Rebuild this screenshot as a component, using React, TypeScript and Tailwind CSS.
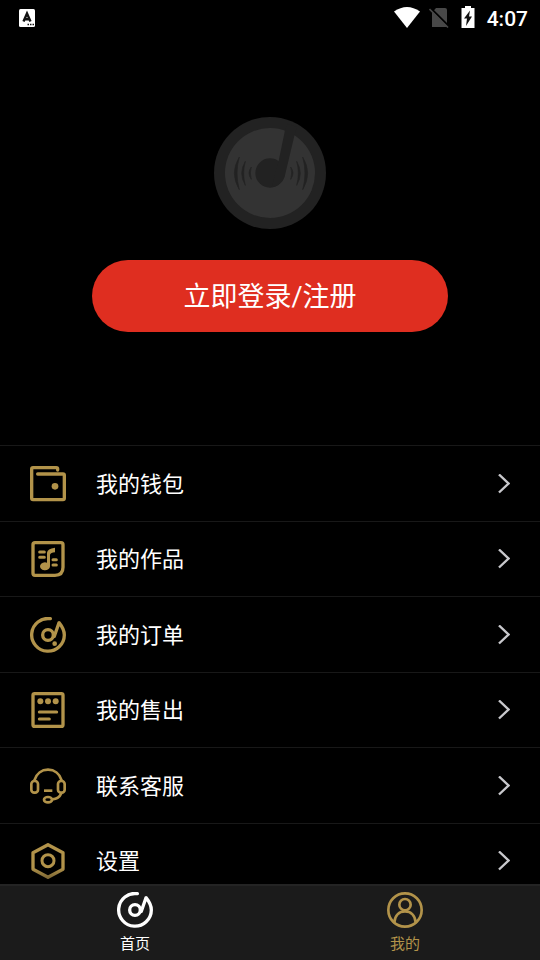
import type { ReactNode } from "react";

interface IconProps {
  children: ReactNode;
}

const LineIcon: React.FC<IconProps> = ({ children }) => (
  <svg
    viewBox="0 0 108 108"
    className="size-9 shrink-0"
    fill="none"
    stroke="currentColor"
    strokeWidth={9}
    strokeLinecap="round"
    strokeLinejoin="round"
    aria-hidden="true"
  >
    {children}
  </svg>
);

const WalletIcon = () => (
  <LineIcon>
    <path strokeWidth={10} d="M83 12V9q0-4-4-4H9q-4 0-4 4v88q0 4 4 4h90q4 0 4-4V28q0-4-4-4H23" />
    <circle cx={75} cy={61} r={10} fill="currentColor" stroke="none" />
  </LineIcon>
);

const WorksIcon = () => (
  <LineIcon>
    <path strokeWidth={10} d="M15 5h78q6 0 6 6v68q0 24-24 24H15q-6 0-6-6V11q0-6 6-6Z" />
    <path
      fill="currentColor"
      stroke="none"
      d="M51 35q1-12 24-15v14q-13 1-15 7v35a15 12 0 1 1-9-11Z"
    />
    <path strokeWidth={9} d="M29 33h14M29 49h14M69 56h10M69 72h10" />
  </LineIcon>
);

const DiscIcon = ({ dot = false }: { dot?: boolean }) => (
  <LineIcon>
    <path strokeWidth={10} d="M61 5A49 49 0 1 0 103 54C103 40 96 28 87 17L73 58" />
    <circle strokeWidth={10} cx={54} cy={54} r={16} />
    {dot && <circle cx={74} cy={80} r={7} fill="currentColor" stroke="none" />}
  </LineIcon>
);

const SoldIcon = () => (
  <LineIcon>
    <rect strokeWidth={10} x={9} y={5} width={90} height={98} rx={5} />
    <g fill="currentColor" stroke="none">
      <circle cx={31} cy={28} r={9} />
      <circle cx={54} cy={28} r={9} />
      <circle cx={77} cy={28} r={9} />
    </g>
    <path d="M28 60h52M28 81h30" />
  </LineIcon>
);

const ServiceIcon = () => (
  <LineIcon>
    <g strokeWidth={8}>
      <rect x={4} y={39} width={20} height={35} rx={9} />
      <rect x={84} y={39} width={20} height={35} rx={9} />
      <path d="M13 37C19 17 35 5 54 5s35 12 41 32M94 76q-7 17-27 18" />
      <ellipse cx={54} cy={95} rx={12} ry={8} />
      <path strokeLinecap="butt" d="M42 68h25" />
    </g>
  </LineIcon>
);

const SettingsIcon = () => (
  <LineIcon>
    <defs>
      <linearGradient id="settings-fade" x1="0" y1="0" x2="0" y2="1">
        <stop offset="0.7" stopColor="#b2934a" />
        <stop offset="1" stopColor="#806a36" />
      </linearGradient>
    </defs>
    <path strokeWidth={10} stroke="url(#settings-fade)" d="M54 5l45 24v50l-45 24L9 79V29Z" />
    <circle cx={54} cy={53} r={18} />
  </LineIcon>
);

const UserIcon = () => (
  <LineIcon>
    <g strokeWidth={8}>
      <circle cx={54} cy={54} r={50} />
      <circle cx={54} cy={38} r={17} />
      <path d="M22 91C24 69 37 58 54 58s30 11 32 33" />
    </g>
  </LineIcon>
);

const ChevronIcon = () => (
  <svg
    viewBox="0 0 12 20"
    className="h-5 w-3 shrink-0 text-[#c8c8cc]"
    fill="none"
    stroke="currentColor"
    strokeWidth={2.4}
    aria-hidden="true"
  >
    <path d="M1 .5l9.500 9L1 18.500" />
  </svg>
);

const menuItems = [
  { label: "我的钱包", icon: <WalletIcon /> },
  { label: "我的作品", icon: <WorksIcon /> },
  { label: "我的订单", icon: <DiscIcon dot /> },
  { label: "我的售出", icon: <SoldIcon /> },
  { label: "联系客服", icon: <ServiceIcon /> },
  { label: "设置", icon: <SettingsIcon /> },
];

const StatusBar = () => (
  <header className="flex h-9 shrink-0 items-center pr-3 pl-[19px]">
    <svg viewBox="0 0 16 18" className="h-[18px] w-4" aria-hidden="true">
      <rect width={16} height={18} rx={1.5} fill="#fff" />
      <path d="M4.500 12.500L8 4.500l3.500 8M6 10.300h4" fill="none" stroke="#111" strokeWidth={2.400} />
      <path d="M8.500 15.500h1.500m1 0h1.500m1 0h1.500" stroke="#111" strokeWidth={1.300} />
    </svg>
    <div className="ml-auto flex items-center">
      <svg viewBox="0 0 26 22" className="h-[22px] w-[26px]" aria-hidden="true">
        <path d="M0 4.500Q13-4.500 26 4.500L13 21Z" fill="#fff" />
      </svg>
      <svg viewBox="0 0 20 22" className="ml-[9px] h-[22px] w-5" aria-hidden="true">
        <path d="M7 1h9q2 0 2 2v17H3V5.500Z" fill="#484848" />
        <path d="M1.500 1L20 19.500" stroke="#000" strokeWidth={2} />
        <path d="M.5 2L19 20.500" stroke="#484848" strokeWidth={1.600} />
      </svg>
      <svg viewBox="0 0 14 24" className="ml-3 h-6 w-[14px]" aria-hidden="true">
        <path d="M4 0h6v2h3.500v20H.5V2H4Z" fill="#fff" />
        <path d="M9 4.500L3 12.500h3l-1 7.500L11 10.500H8Z" fill="#111" />
      </svg>
      <time className="ml-3 pt-0.5 text-[21px] leading-6 font-medium">4:07</time>
    </div>
  </header>
);

const RecordAvatar = () => (
  <svg viewBox="0 0 336 336" className="size-28" aria-hidden="true">
    <circle cx={168} cy={168} r={168} fill="#222" />
    <circle cx={168} cy={168} r={135} fill="#333" />
    <g fill="#222">
      <circle cx={168} cy={168} r={44} />
      <path d="M213 40l8-20 28 10-8 27-28 118c-5 20-20 32-40 36l21-80Z" />
      <g stroke="#222" strokeWidth={2}>
        <path d="M76 120Q46 169 76 218Q62 169 76 120ZM94 133Q72 169 94 205Q84 169 94 133ZM112 150Q98 168 112 187Q106 168 112 150Z" />
        <path d="M266 120Q296 169 266 218Q280 169 266 120ZM248 133Q270 169 248 205Q258 169 248 133ZM230 150Q244 168 230 187Q236 168 230 150Z" />
      </g>
    </g>
  </svg>
);

export default function App() {
  return (
    <div className="flex h-screen flex-col bg-black font-[Roboto,'Noto_Sans_CJK_SC',sans-serif] text-white">
      <StatusBar />

      <main className="min-h-0 flex-1 overflow-y-auto [scrollbar-width:none]">
        {/* Login */}
        <section className="flex flex-col items-center px-[92px] pt-[81px] pb-[113px]">
          <RecordAvatar />
          <button
            type="button"
            className="mt-[31px] h-[72px] w-full rounded-full bg-[#df2e20] pt-0.5 text-[27px] leading-9"
          >
            立即登录/注册
          </button>
        </section>

        {/* Menu */}
        <ul>
          {menuItems.map((item) => (
            <li key={item.label} className="border-t border-[#181818] odd:h-[76px] even:h-[75px]">
              <button type="button" className="flex h-full w-full items-center px-[30px] text-left text-[#b2934a]">
                {item.icon}
                <span className="ml-[30px] flex-1 pt-0.5 text-[22px] leading-8 text-white">{item.label}</span>
                <ChevronIcon />
              </button>
            </li>
          ))}
        </ul>
      </main>

      {/* Bottom tabs */}
      <nav className="flex h-[76px] shrink-0 border-t-2 border-[#242424] bg-[#1b1b1b] text-[15px] leading-5">
        <a href="#home" className="flex flex-1 flex-col items-center gap-1.5 pt-1.5">
          <DiscIcon />
          首页
        </a>
        <a href="#mine" className="flex flex-1 flex-col items-center gap-1.5 pt-1.5 text-[#b2934a]">
          <UserIcon />
          我的
        </a>
      </nav>
    </div>
  );
}
